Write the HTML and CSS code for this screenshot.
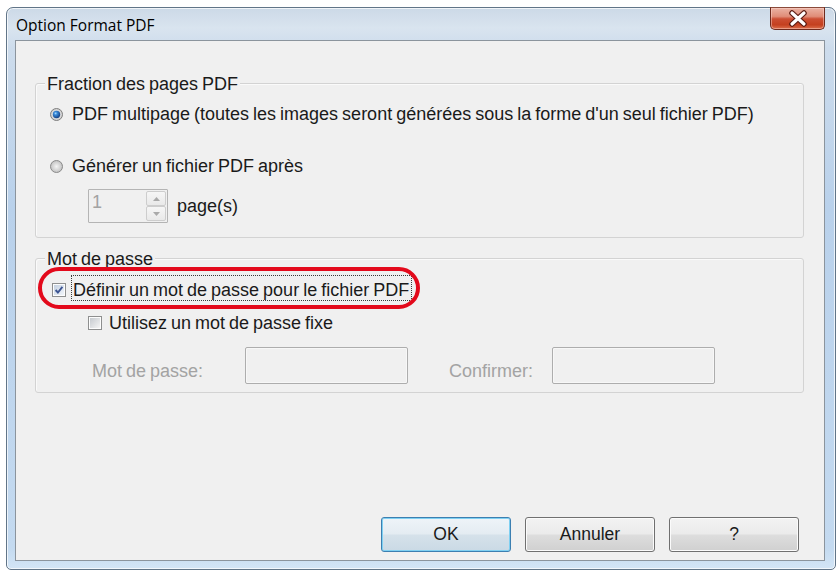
FILE: index.html
```html
<!DOCTYPE html>
<html lang="fr">
<head>
<meta charset="utf-8">
<title>Option Format PDF</title>
<link rel="stylesheet" href="styles.css">
</head>
<body>
<div class="window">
  <div class="titlebar">
    <span class="title">Option Format PDF</span>
    <div class="close">
      <svg width="53" height="22" viewBox="0 0 53 22">
        <path d="M21 5 L33 16 M33 5 L21 16" stroke="#5a1a10" stroke-width="5.5" stroke-linecap="round" fill="none"/>
        <path d="M21 5 L33 16 M33 5 L21 16" stroke="#ffffff" stroke-width="3.2" stroke-linecap="round" fill="none"/>
      </svg>
    </div>
  </div>
  <div class="client">
    <div class="group g1">
      <div class="legend">Fraction des pages PDF</div>
      <div class="row r1">
        <svg class="radio" width="13" height="13" viewBox="0 0 13 13">
          <defs>
            <radialGradient id="rbg1" cx="50%" cy="50%" r="55%"><stop offset="0" stop-color="#fbfbfb"/><stop offset="1" stop-color="#c6c6c6"/></radialGradient>
            <radialGradient id="rdot1" cx="38%" cy="35%" r="70%"><stop offset="0" stop-color="#a8dcff"/><stop offset="0.3" stop-color="#3a8ad8"/><stop offset="1" stop-color="#123a7c"/></radialGradient>
          </defs>
          <circle cx="6.5" cy="6.5" r="6" fill="url(#rbg1)" stroke="#7f7f7f"/>
          <circle cx="6.5" cy="6.5" r="3.7" fill="url(#rdot1)"/>
        </svg>
        <span>PDF multipage (toutes les images seront générées sous la forme d'un seul fichier PDF)</span>
      </div>
      <div class="row r2">
        <svg class="radio" width="13" height="13" viewBox="0 0 13 13">
          <defs>
            <radialGradient id="rbg2" cx="50%" cy="50%" r="55%"><stop offset="0" stop-color="#f4f4f4"/><stop offset="1" stop-color="#bdbdbd"/></radialGradient>
          </defs>
          <circle cx="6.5" cy="6.5" r="6" fill="url(#rbg2)" stroke="#8a8a8a"/>
        </svg>
        <span>Générer un fichier PDF après</span>
      </div>
      <div class="spinrow">
        <div class="spin">
          <span class="spinval">1</span>
          <div class="spinbtns">
            <div class="sb"><svg width="7" height="4" viewBox="0 0 7 4"><path d="M0 4 L3.5 0 L7 4 Z" fill="#a9a9a9"/></svg></div>
            <div class="sb"><svg width="7" height="4" viewBox="0 0 7 4"><path d="M0 0 L7 0 L3.5 4 Z" fill="#a9a9a9"/></svg></div>
          </div>
        </div>
        <span class="pages">page(s)</span>
      </div>
    </div>

    <div class="group g2">
      <div class="legend">Mot de passe</div>
      <div class="row c1">
        <svg class="check" width="14" height="14" viewBox="0 0 14 14">
          <defs>
            <linearGradient id="cbg1" x1="0" y1="0" x2="1" y2="1"><stop offset="0" stop-color="#c4d0e0"/><stop offset="1" stop-color="#f2f6fb"/></linearGradient>
          </defs>
          <rect x="0.5" y="0.5" width="13" height="13" fill="#fdfdfd" stroke="#8e8f8f"/>
          <rect x="2" y="2" width="10" height="10" fill="url(#cbg1)"/>
          <path d="M3.6 7 L5.9 9.5 L10.4 3.9" stroke="#3d5592" stroke-width="1.9" fill="none"/>
        </svg>
        <span class="focus">Définir un mot de passe pour le fichier PDF</span>
      </div>
      <div class="row c2">
        <svg class="check" width="14" height="14" viewBox="0 0 14 14">
          <defs>
            <linearGradient id="cbg2" x1="0" y1="0" x2="1" y2="1"><stop offset="0" stop-color="#c6cacf"/><stop offset="1" stop-color="#f5f5f5"/></linearGradient>
          </defs>
          <rect x="0.5" y="0.5" width="13" height="13" fill="#fdfdfd" stroke="#8e8f8f"/>
          <rect x="2" y="2" width="10" height="10" fill="url(#cbg2)"/>
        </svg>
        <span>Utilisez un mot de passe fixe</span>
      </div>
      <div class="fields">
        <span class="flabel l1">Mot de passe:</span>
        <div class="input"></div>
        <span class="flabel l2">Confirmer:</span>
        <div class="input"></div>
      </div>
      <div class="highlight"></div>
    </div>

    <div class="buttons">
      <div class="btn default">OK</div>
      <div class="btn">Annuler</div>
      <div class="btn">?</div>
    </div>
  </div>
</div>
</body>
</html>
```

FILE: styles.css
```css
html, body {
  margin: 0;
  padding: 0;
  background: #ffffff;
}

body {
  font-family: "Liberation Sans", Arial, sans-serif;
  font-size: 18px;
  word-spacing: -1px;
  color: #1a1a1a;
}

.window {
  box-sizing: border-box;
  width: 830px;
  height: 563px;
  margin: 7px 0 0 6px;
  border: 1px solid #617588;
  border-radius: 7px 7px 5px 5px;
  padding: 0 10px 8px 8px;
  display: flex;
  flex-direction: column;
  background: linear-gradient(180deg, #ccd9e7 0px, #d9e4ef 20px, #cddcec 40px, #b9d1eb 200px, #c4daf0 540px, #d4e6f6 563px);
  box-shadow: inset 0 0 0 1px rgba(255, 255, 255, 0.7);
}

.titlebar {
  height: 32px;
  flex-shrink: 0;
  display: flex;
  align-items: flex-start;
}

.title {
  font-family: "Open Sans", "Noto Sans", sans-serif;
  font-size: 15.5px;
  word-spacing: 0;
  line-height: 22px;
  margin: 6px 0 0 1px;
  color: #000000;
}

.close {
  margin-left: auto;
  margin-top: -1px;
  width: 55px;
  height: 23px;
  box-sizing: border-box;
  border: 1px solid #6e2a1d;
  border-top-color: #8a4a3a;
  border-radius: 0 0 5px 5px;
  background: linear-gradient(180deg, #eab2a3 0%, #e08d78 40%, #cc4e33 52%, #c4401f 80%, #dc6f4c 100%);
  box-shadow: inset 0 0 0 1px rgba(255, 220, 210, 0.45);
  display: flex;
}

.client {
  flex: 1;
  background: #f0f0f0;
  border: 1px solid #8b949d;
  display: flex;
  flex-direction: column;
  padding: 42px 20px 8px 19px;
}

.group {
  position: relative;
  border: 1px solid #d3d3d3;
  border-radius: 3px;
  box-shadow: inset 1px 1px 0 #fafafa;
}

.g1 {
  padding-bottom: 14px;
}

.g2 {
  margin-top: 20px;
  padding-bottom: 8px;
}

.legend {
  width: fit-content;
  margin: -10px 0 0 9px;
  padding: 0 2px;
  background: #f0f0f0;
  line-height: 20px;
}

.row {
  display: flex;
  align-items: center;
  height: 28px;
  line-height: 20px;
}

.r1 {
  margin-top: 6px;
  padding-left: 14px;
}

.r2 {
  margin-top: 24px;
  padding-left: 14px;
}

.radio {
  flex-shrink: 0;
  margin-right: 9px;
}

.spinrow {
  margin-top: 9px;
  padding-left: 52px;
  display: flex;
  align-items: center;
  height: 34px;
}

.spin {
  box-sizing: border-box;
  width: 80px;
  height: 34px;
  border: 1px solid #b4b4b4;
  border-radius: 1px;
  background: #f0f0f0;
  display: flex;
}

.spinval {
  flex: 1;
  color: #a3a3a3;
  line-height: 20px;
  padding: 2px 0 0 3px;
}

.spinbtns {
  width: 20px;
  margin: 1px 1px 1px 0;
  display: flex;
  flex-direction: column;
}

.sb {
  flex: 1;
  box-sizing: border-box;
  border: 1px solid #cdcdcd;
  border-radius: 2px;
  background: linear-gradient(180deg, #f6f6f6, #e9e9e9);
  display: flex;
  align-items: center;
  justify-content: center;
}

.pages {
  margin-left: 9px;
  line-height: 20px;
}

.c1 {
  margin-top: 6px;
  padding-left: 16px;
  align-items: flex-start;
}

.c1 .check {
  margin-top: 8px;
  margin-right: 5px;
}

.focus {
  border: 1px dotted #3a3a3a;
  padding: 4px 2px 0 1px;
  line-height: 20px;
  height: 20px;
}

.c2 {
  margin-top: 6px;
  padding-left: 52px;
}

.c2 .check {
  margin-right: 7px;
}

.check {
  flex-shrink: 0;
}

.fields {
  margin-top: 10px;
  display: flex;
  align-items: flex-start;
  height: 37px;
}

.flabel {
  color: #a3a3a3;
  line-height: 20px;
  margin-top: 14px;
}

.l1 {
  margin-left: 56px;
  width: 153px;
}

.l2 {
  margin-left: 41px;
  width: 103px;
}

.input {
  box-sizing: border-box;
  width: 163px;
  height: 37px;
  border: 1px solid #adadad;
  border-radius: 2px;
  background: #f0f0f0;
  box-shadow: inset 0 0 0 1px #f7f7f7;
}

.highlight {
  position: absolute;
  left: 2px;
  top: 8px;
  width: 382px;
  height: 42px;
  box-sizing: border-box;
  border: 4px solid #e3091b;
  border-radius: 21px;
}

.buttons {
  margin-top: auto;
  margin-right: 5px;
  display: flex;
  justify-content: flex-end;
  gap: 14px;
}

.btn {
  box-sizing: border-box;
  width: 130px;
  height: 35px;
  border: 1px solid #707070;
  border-radius: 3px;
  background: linear-gradient(180deg, #f3f3f3 0%, #ebebeb 48%, #dddddd 52%, #d0d0d0 100%);
  box-shadow: inset 0 0 0 1px #fbfbfb;
  font-size: 17.5px;
  display: flex;
  align-items: center;
  justify-content: center;
}

.btn.default {
  border-color: #3c7fb1;
  background: linear-gradient(180deg, #eef4f8 0%, #e4ecf2 48%, #d5e1ea 52%, #cad9e5 100%);
  box-shadow: inset 0 0 0 1px #7fd0f2;
}
```
